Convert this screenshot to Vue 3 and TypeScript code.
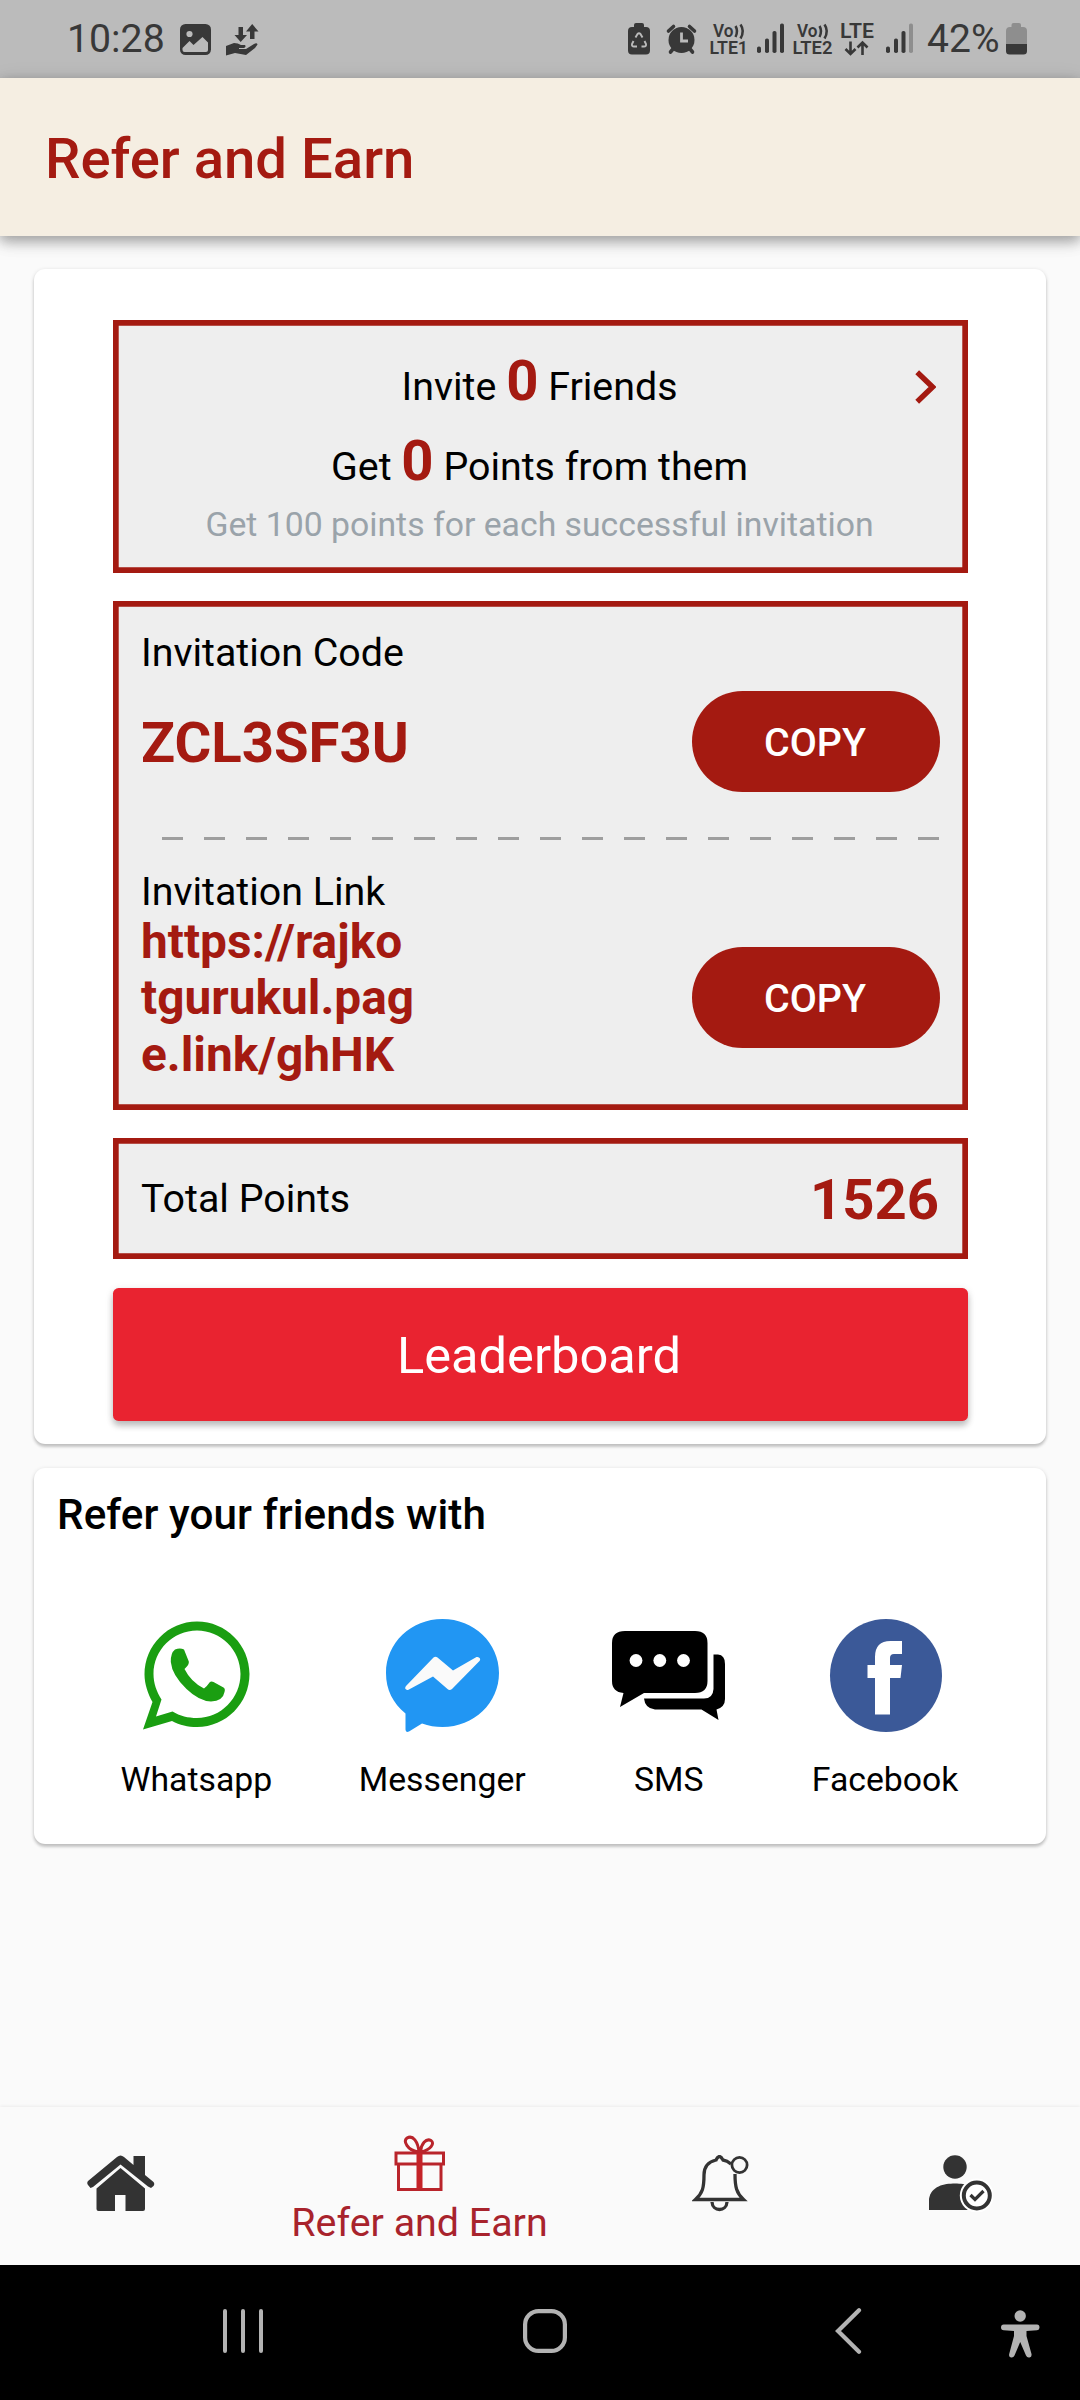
<script setup lang="ts">
import { ref } from 'vue'

interface ShareTarget {
  id: 'whatsapp' | 'messenger' | 'sms' | 'facebook'
  label: string
}

const friends = ref<number>(0)
const earned = ref<number>(0)
const totalPoints = ref<number>(1526)
const code = 'ZCL3SF3U'
const linkLines: string[] = ['https://rajko', 'tgurukul.pag', 'e.link/ghHK']
const dashes = 19

const targets: ShareTarget[] = [
  { id: 'whatsapp', label: 'Whatsapp' },
  { id: 'messenger', label: 'Messenger' },
  { id: 'sms', label: 'SMS' },
  { id: 'facebook', label: 'Facebook' },
]
</script>

<template>
  <div class="screen">
    <header class="status">
      <span class="clock">10:28</span>
      <svg class="s-photo" width="31" height="31" viewBox="0 0 31 31">
        <rect width="31" height="31" rx="5.5" fill="#383838" />
        <circle cx="9.5" cy="10" r="3.1" fill="#bbb" />
        <path d="M2.5 24 L9.5 17 L13.5 21 L22.5 13 L28 18.5 V26 Q28 28 26 28 H4.500 Q2.500 28 2.500 26 Z" fill="#bbb" />
      </svg>
      <svg class="s-hand" width="33" height="32" viewBox="0 0 33 32" fill="#383838">
        <path d="M12.500 3 H17 V11 H21 L14.700 18 L8.500 11 H12.500 Z" />
        <path d="M24 15 V7.500 H20 L26.200 0 L32.500 7.500 H28.500 V15 Z" />
        <path d="M0 22 L8 19 Q12 19 15 21 H19 Q20.500 23 18 24 H13 V25 H20 L28 20 Q31 18.500 31.500 20.500 L29 24 L20 31 L9 29 L0 31.500 Z" />
      </svg>
      <span class="fill"></span>
      <svg width="400" height="78" viewBox="628 0 400 78" fill="#383838">
        <path d="M634 27 V25 Q634 23 636 23 H642 Q644 23 644 25 V27 H646 Q650 27 650 31 V50.500 Q650 54.500 646 54.500 H632 Q628 54.500 628 50.500 V31 Q628 27 632 27 Z" />
        <g fill="none" stroke="#bbb" stroke-width="1.9">
          <path d="M635.500 37.500 L637.500 34 Q639 32.500 640.500 34 L642.500 37.500 M644.500 41 L646 44 Q646.500 46.500 644 46.500 H641.500 M637 46.500 H634 Q631.500 46.500 632 44 L633.500 41" />
        </g>
        <path d="M639 36.500 L642 42 L643 45 H635 L636 42 Z" fill="#383838" />
        <circle cx="681.500" cy="40" r="13" />
        <path d="M681.500 32.500 V41 H688" fill="none" stroke="#bbb" stroke-width="2.800" />
        <path d="M668.500 31 L673.500 26.500 M694.500 31 L689.500 26.500 M673 49 L670.500 52 M690 49 L692.500 52" stroke="#383838" stroke-width="3.600" stroke-linecap="round" />
        <g class="vo">
          <text x="713" y="36.800" textLength="20.500" lengthAdjust="spacingAndGlyphs">Vo</text>
          <text x="709.500" y="54" textLength="38.500" lengthAdjust="spacingAndGlyphs">LTE1</text>
          <text x="797" y="36.800" textLength="20.500" lengthAdjust="spacingAndGlyphs">Vo</text>
          <text x="792.500" y="54" textLength="40" lengthAdjust="spacingAndGlyphs">LTE2</text>
        </g>
        <text class="lte" x="840" y="37.700" textLength="34" lengthAdjust="spacingAndGlyphs">LTE</text>
        <g fill="none" stroke="#383838" stroke-width="2.500">
          <path d="M735.500 26 Q738.500 31 735.500 37 M740.500 24.500 Q745 31 740.500 38.500" />
          <path d="M819.500 26 Q822.500 31 819.500 37 M824.500 24.500 Q829 31 824.500 38.500" />
          <path d="M850.500 41.500 V54 M845.500 49 L850.500 54 L855.500 49 M862.500 55 V42.500 M857.500 47.500 L862.500 42.500 L867.500 47.500" stroke-width="2.600" />
        </g>
        <rect x="757" y="46.500" width="4" height="6.500" rx="1.800" />
        <rect x="765" y="38.500" width="4" height="14.500" rx="1.800" />
        <rect x="772.500" y="31" width="4" height="22" rx="1.800" />
        <rect x="780" y="23.500" width="4" height="29.500" rx="1.800" />
        <rect x="886" y="46.500" width="4" height="6.500" rx="1.800" />
        <rect x="894" y="38.500" width="4" height="14.500" rx="1.800" />
        <rect x="901.500" y="31" width="4" height="22" rx="1.800" />
        <rect x="909" y="23.500" width="4" height="29.500" rx="1.800" fill="#8e8e8e" />
        <text class="pct" x="927" y="52" textLength="72.500" lengthAdjust="spacingAndGlyphs">42%</text>
        <path d="M1011.500 27 V25 Q1011.500 23 1013.500 23 H1019 Q1021 23 1021 25 V27 H1023 Q1027 27 1027 31 V44 H1006 V31 Q1006 27 1010 27 Z" fill="#8e8e8e" />
        <path d="M1006 44 H1027 V51 Q1027 54.500 1023.500 54.500 H1009.500 Q1006 54.500 1006 51 Z" />
      </svg>
    </header>

    <div class="appbar"><h1>Refer and Earn</h1></div>

    <main>
      <section class="card main-card">
        <div class="box invite">
          <div class="invite-row">
            <span></span>
            <p>Invite <b>{{ friends }}</b> Friends</p>
            <svg class="chevron" width="21" height="34" viewBox="0 0 21 34">
              <path d="M2.200 2.300 L17.500 17 L2.200 31.700" fill="none" stroke="#a41a11" stroke-width="5.400" />
            </svg>
          </div>
          <p class="get">Get <b>{{ earned }}</b> Points from them</p>
          <p class="hint">Get 100 points for each successful invitation</p>
        </div>

        <div class="box codes">
          <p class="label">Invitation Code</p>
          <div class="copy-row">
            <strong class="code">{{ code }}</strong>
            <button class="copy">COPY</button>
          </div>
          <div class="dashes"><i v-for="n in dashes" :key="n"></i></div>
          <div class="link-row">
            <div>
              <p class="label">Invitation Link</p>
              <strong class="link"><span v-for="l in linkLines" :key="l">{{ l }}</span></strong>
            </div>
            <button class="copy">COPY</button>
          </div>
        </div>

        <div class="box total">
          <span class="label">Total Points</span>
          <strong class="points">{{ totalPoints }}</strong>
        </div>

        <button class="leader">Leaderboard</button>
      </section>

      <section class="card share">
        <h2>Refer your friends with</h2>
        <div class="share-row">
          <div v-for="t in targets" :key="t.id" class="target">
            <svg width="113" height="113" viewBox="0 0 113 113">
              <template v-if="t.id === 'whatsapp'">
                <path fill-rule="evenodd" fill="#1a9e11" d="M3 110.500 L12.500 83 C8 75 4.500 65 4.500 55.500 C4.500 26.500 28 2.500 57 2.500 C86 2.500 109.500 26 109.500 55 C109.500 84 86 108 57 108 C47.500 108 40 106 32 102 Z M16 97.500 L32.500 92.500 C40 97 48 99 57 99 C81 99 100.500 79 100.500 55 C100.500 31 81 11.500 57 11.500 C33 11.500 13.500 31 13.500 55 C13.500 64 16.500 72.500 21.500 80.500 Z" />
                <path fill="#1a9e11" d="M35 30.500 Q40 28.500 44 30.500 L48.800 42.500 Q49.500 45.500 44.500 50 Q51 63 64 69.500 Q66.500 68 69.500 63.500 Q71 62 73.500 63 L83.500 68.500 Q85.500 69.500 84.500 73 Q83 82 71 82.500 Q59 82 46.500 70 Q32 56 30.800 43 Q30.500 34 35 30.500 Z" />
              </template>
              <template v-else-if="t.id === 'messenger'">
                <path fill="#2196f3" d="M56.500 0 C88 0 113 24 113 54 C113 84 88 108 56.500 108 C49.500 108 42.500 107 36 104.500 L23 112.500 Q19.500 114 19.500 110.500 V94.500 C7 84 0 71 0 54 C0 24 25 0 56.500 0 Z" />
                <path fill="#fafafa" d="M20 67 L47.500 38.500 Q49.500 37 51.500 38.500 L67 51.500 L90.500 38 Q93 37.500 94 39.500 Q94.500 41 93.500 42 L66 70 Q63.500 72 61.500 70 L47 57.500 L22.500 70.800 Q20 71.500 19.200 69.500 Q19 68 20 67 Z" />
              </template>
              <template v-else-if="t.id === 'sms'">
                <path d="M13 12 H83 Q95.500 12 95.500 24 V62 Q95.500 74 83 74 H32 L8 88 L11.500 74 Q0 73 0 62 V24 Q0 12 13 12 Z" />
                <path d="M101.500 35.500 H106 Q113 36 113 45 V80 Q113 88 104.500 90.500 L106.500 101 L89.500 90.500 H43 Q33 89.500 32 79.500 H92 Q101 79.500 101.500 70 Z" />
                <circle v-for="cx in [24, 47.800, 71.500]" :key="cx" :cx="cx" cy="41.500" r="6.400" fill="#fff" />
              </template>
              <template v-else>
                <ellipse cx="57" cy="56.500" rx="56" ry="56.500" fill="#3b5998" />
                <path fill="#fff" d="M46 95.500 V59 H38.500 V46 H46 V38 Q46 22 61.500 22 H73 V35 H65 Q61 35 61 39 V46 H73 L71.500 59 H61 V95.500 Z" />
              </template>
            </svg>
            <span>{{ t.label }}</span>
          </div>
        </div>
      </section>
    </main>

    <nav class="tabs">
      <a class="tab">
        <svg class="shift" width="68" height="57" viewBox="0 0 68 57" fill="#333">
          <path d="M1 26 L30 2 Q33.500-1 37 2 L46.500 10 V1 H58 V20 L66.500 27 Q68 29 66.500 31 L64 33 L61 31.500 L33.500 9.500 L6 32 L3.500 33 L1 30 Q-.5 28 1 26 Z" />
          <path d="M33.500 13 L58 33.500 V54 Q58 56 56 56 H38.500 V40 H28 V56 H11.500 Q9.500 56 9.500 54 V33.500 Z" />
        </svg>
      </a>
      <a class="tab active">
        <svg width="52" height="57" viewBox="0 0 52 57" fill="none" stroke="#b9242b" stroke-width="3">
          <rect x="2" y="18" width="47.500" height="11" />
          <path d="M4.500 29 V54.500 H47 V29" />
          <path d="M25.500 18 V54" stroke="#c42328" stroke-width="6" />
          <path d="M24 17 C13 15 9 6 13 3 C19-.5 24 7 25 17 M27 17 C37 15 41 8 37 5.500 C32 3 27 9 26.500 17" />
        </svg>
        <span>Refer and Earn</span>
      </a>
      <a class="tab">
        <svg class="shift" width="58" height="57" viewBox="0 0 58 57" fill="none" stroke="#333" stroke-width="3.300">
          <path d="M39 9 Q35 5.500 31 5 Q29 1.500 27.500 1.500 Q25.500 1.500 24 5 C15 7 12 13 12 20 C12 33 10.500 38 3.500 44.500 H51.500 C44.500 38 43 32 43 19" />
          <path d="M20 47 C20.500 57 34.500 57 35 47" />
          <circle cx="47.500" cy="10" r="7.600" fill="#fafafa" stroke-width="2.800" />
        </svg>
      </a>
      <a class="tab">
        <svg class="shift" width="64" height="57" viewBox="0 0 64 57">
          <circle cx="26" cy="12" r="11.700" fill="#333" />
          <path d="M0 55 V44 C2 31 15 28.500 26 28.500 C37 28.500 47 31 50 44 V55 Z" fill="#333" />
          <circle cx="47.800" cy="40.500" r="17" fill="#fff" />
          <circle cx="47.800" cy="40.500" r="13" fill="#fff" stroke="#333" stroke-width="4" />
          <path d="M41.500 40 L46 44.500 L54.500 36" fill="none" stroke="#333" stroke-width="3.200" />
        </svg>
      </a>
    </nav>

    <footer class="sys">
      <svg class="recents" width="40" height="44" viewBox="0 0 40 44" stroke="#b3b3b3" stroke-width="4" stroke-linecap="round">
        <path d="M2 2 V42 M20 2 V42 M38 2 V42" />
      </svg>
      <svg class="home" width="44" height="44" viewBox="0 0 44 44" fill="none" stroke="#b3b3b3" stroke-width="4.200">
        <rect x="2.100" y="2.100" width="39.800" height="39.800" rx="13.500" />
      </svg>
      <svg class="back" width="27" height="46" viewBox="0 0 27 46" fill="none" stroke="#b3b3b3" stroke-width="4.200" stroke-linecap="round">
        <path d="M24 2.300 L3 23 L24 43.700" />
      </svg>
      <svg class="a11y" width="39" height="48" viewBox="0 0 39 48" fill="#b3b3b3">
        <circle cx="19.200" cy="6" r="5.700" />
        <path d="M2.700 14.500 H36 Q38.500 14.500 38.500 17.500 Q38.500 20 36 20.200 L25.500 21 V26 L30.500 44 Q31 47 28.500 47.400 Q26 47.800 25 45.500 L19.200 32 L13.500 45.500 Q12.500 47.800 10 47.400 Q7.500 47 8.200 44 L13 26 V21 L2.700 20.200 Q0 20 0 17.500 Q0 14.500 2.700 14.500 Z" />
      </svg>
    </footer>
  </div>
</template>

<style>
body {
  background: #fafafa;
}
</style>

<style scoped>
.screen {
  display: flex;
  flex-direction: column;
  width: 1080px;
  height: 2400px;
  overflow: hidden;
  background: #fafafa;
  color: #000;
  font-family: Roboto, 'Liberation Sans', sans-serif;
}
* {
  box-sizing: border-box;
}
p, h1, h2 {
  margin: 0;
  font-weight: 400;
}
svg {
  display: block;
  flex: none;
}
button {
  border: 0;
  padding: 0;
  font-family: inherit;
  color: #fff;
}
.status {
  display: flex;
  align-items: flex-start;
  height: 78px;
  padding: 0 52px 0 67px;
  background: #bbb;
}
.clock {
  width: 113px;
  margin-top: 15px;
  font-size: 39.25px;
  line-height: 48px;
  color: #383838;
}
.s-photo {
  margin-top: 24px;
}
.s-hand {
  margin: 24px 0 0 15px;
}
.fill {
  flex: 1;
}
.vo text {
  font-size: 17.800px;
  font-weight: 600;
}
.lte {
  font-size: 20px;
  font-weight: 600;
}
.pct {
  font-size: 39.500px;
}
.appbar {
  position: relative;
  display: flex;
  align-items: center;
  height: 157.500px;
  padding: 4px 45px 0;
  background: #f5eee2;
  box-shadow: 0 4px 11px rgba(0, 0, 0, 0.22), 0 8px 14px rgba(0, 0, 0, 0.12), 0 3px 20px rgba(0, 0, 0, 0.1);
}
.appbar h1 {
  font-size: 56.25px;
  font-weight: 500;
  color: #a41a11;
}
main {
  flex: 1;
  padding: 33.500px 34px 0;
}
.card {
  background: #fff;
  border-radius: 11.250px;
  box-shadow: 0 3px 3px rgba(0, 0, 0, 0.16), 0 1px 4px rgba(0, 0, 0, 0.14);
}
.main-card {
  height: 1175px;
  padding: 50.500px 78px 0 79px;
}
.box {
  background: #eee;
  box-shadow: inset 0 0 0 5.700px #a41a11;
  font-size: 39.375px;
}
.invite {
  display: flex;
  flex-direction: column;
  height: 253px;
  padding: 37.500px 2px 0 0;
  text-align: center;
}
.invite p {
  line-height: 60px;
}
.invite b {
  font-size: 56.250px;
  line-height: 0;
  color: #a41a11;
}
.invite-row {
  display: grid;
  grid-template-columns: 1fr auto 1fr;
  align-items: center;
  margin-bottom: 19.700px;
}
.chevron {
  justify-self: end;
  margin: 0 30px 1px 0;
}
.invite .hint {
  margin-top: 8px;
  font-size: 33.750px;
  line-height: 40px;
  color: #9aa3aa;
}
.codes {
  height: 509px;
  margin-top: 28px;
  padding: 28px 28.500px 0 28px;
}
.label {
  line-height: 48px;
}
.copy-row {
  display: flex;
  align-items: center;
  justify-content: space-between;
  height: 101px;
  margin-top: 14px;
}
.code,
.points {
  padding-top: 3px;
  font-size: 56.250px;
  line-height: 66px;
  color: #a41a11;
}
.copy {
  flex: none;
  width: 248px;
  height: 101px;
  padding: 2px 1px 0 0;
  border-radius: 50.500px;
  background: #a41a11;
  font-size: 39.375px;
  font-weight: 500;
}
.dashes {
  display: flex;
  justify-content: space-between;
  height: 3px;
  margin: 45px 0 0 21px;
}
.dashes i {
  width: 21px;
  background: #9e9e9e;
}
.link-row {
  display: flex;
  align-items: flex-start;
  justify-content: space-between;
  margin-top: 28px;
}
.link-row .copy {
  margin-top: 79px;
}
.link {
  display: block;
  margin-top: -2px;
}
.link span {
  display: block;
  font-size: 47.800px;
  line-height: 56.500px;
  color: #a41a11;
}
.total {
  display: flex;
  align-items: center;
  justify-content: space-between;
  height: 121px;
  margin-top: 28px;
  padding: 0 29px 0 28px;
}
.total .label {
  padding-top: 2px;
}
.leader {
  display: block;
  width: 855px;
  height: 133px;
  margin: 29px 0 0 -0.500px;
  padding: 2px 2px 0 0;
  border-radius: 5.600px;
  background: #e92330;
  font-size: 50.625px;
  box-shadow: 0 5px 6px rgba(0, 0, 0, 0.2), 0 2px 8px rgba(0, 0, 0, 0.12);
}
.share {
  height: 376px;
  margin-top: 23.500px;
  padding-top: 22px;
}
.share h2 {
  padding-left: 23px;
  font-size: 42.190px;
  font-weight: 500;
  line-height: 50px;
  letter-spacing: 0.09px;
}
.share-row {
  display: flex;
  justify-content: space-evenly;
  margin-top: 79px;
  padding-right: 1px;
}
.target {
  display: flex;
  flex-direction: column;
  align-items: center;
  font-size: 33.750px;
}
.target span {
  margin-top: 28px;
  line-height: 40px;
}
.tabs {
  display: grid;
  grid-template-columns: 240px 360px 240px 240px;
  height: 158px;
  background: #fafafa;
  box-shadow: 0 -1px 3px rgba(0, 0, 0, 0.06);
}
.tab {
  display: flex;
  flex-direction: column;
  align-items: center;
  justify-content: flex-start;
  padding-top: 48px;
}
.shift {
  margin-left: 2px;
}
.active {
  padding-top: 28px;
}
.active span {
  margin: 8px 1px 0 0;
  font-size: 39.375px;
  line-height: 46px;
  color: #a8232c;
}
.sys {
  display: flex;
  align-items: center;
  height: 135px;
  padding: 0 0 3px 223px;
  background: #000;
}
.sys .home {
  margin-left: 260px;
}
.sys .back {
  margin-left: 268px;
}
.sys .a11y {
  margin: 5px 0 0 139px;
}
</style>
